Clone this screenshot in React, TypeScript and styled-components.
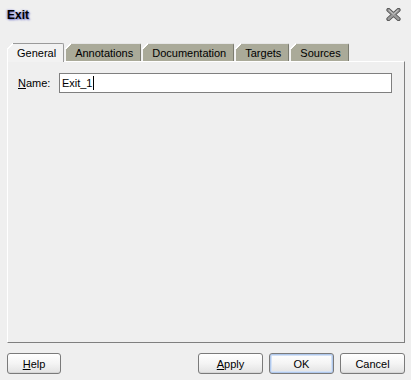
import React from "react";
import styled, { createGlobalStyle } from "styled-components";

const Global = createGlobalStyle`
  html, body { margin: 0; padding: 0; background: #efefef; }
  body { font-family: "Liberation Sans", Arial, sans-serif; font-size: 11px; color: #000; }
`;

const Dialog = styled.div`
  width: 411px;
  height: 380px;
  box-sizing: border-box;
  display: flex;
  flex-direction: column;
  padding: 0 6px 0 7px;
  background: #efefef;
`;

const Header = styled.div`
  height: 43px;
  display: flex;
  justify-content: space-between;
  align-items: flex-start;
`;

const Title = styled.div`
  font-weight: bold;
  font-size: 12px;
  line-height: 14px;
  margin-top: 8px;
  color: #000;
  text-shadow: 1px 1px 2px #6f72c8, -1px 0 2px #9a9ce0;
`;

const CloseBtn = styled.div`
  margin-top: 8px;
  margin-right: 4px;
  width: 15px;
  height: 13px;
`;

const TabStrip = styled.div`
  display: flex;
  gap: 1px;
  height: 18px;
  align-items: stretch;
`;

const Tab = styled.div<{ $active?: boolean }>`
  position: relative;
  box-sizing: border-box;
  padding: 0 7px 0 9px;
  display: flex;
  align-items: center;
  background: ${(p) => (p.$active ? "#f2f2f2" : "#aaaa99")};
  border-top: 1px solid ${(p) => (p.$active ? "#9a9a9a" : "#e6e6e6")};
  border-left: 1px solid ${(p) => (p.$active ? "#ffffff" : "#f4f4f4")};
  border-right: 1px solid ${(p) => (p.$active ? "#9a9a9a" : "#7c7c70")};
  border-top-right-radius: 2px;
  height: ${(p) => (p.$active ? "19px" : "18px")};
  margin-bottom: ${(p) => (p.$active ? "-1px" : "0")};
  z-index: ${(p) => (p.$active ? 1 : 0)};
  &::before {
    content: "";
    position: absolute;
    left: -1px;
    top: -1px;
    width: 6px;
    height: 6px;
    background: linear-gradient(
      135deg,
      #efefef 0,
      #efefef 46%,
      #ffffff 46%,
      #ffffff 62%,
      transparent 62%
    );
  }
`;

const Panel = styled.div`
  flex: 0 0 auto;
  height: 282px;
  box-sizing: border-box;
  border-top: 1px solid #ffffff;
  border-left: 1px solid #ffffff;
  border-right: 1px solid #7f7f7f;
  border-bottom: 1px solid #7f7f7f;
  background: #efefef;
  padding: 11px 12px 0 10px;
`;

const FieldRow = styled.div`
  display: flex;
  align-items: center;
`;

const Label = styled.label`
  width: 41px;
  u { text-decoration: underline; }
`;

const Input = styled.div`
  width: 334px;
  height: 20px;
  box-sizing: border-box;
  border: 1px solid #7f7f7f;
  background: #fff;
  display: flex;
  align-items: center;
  padding-left: 2px;
`;

const Caret = styled.span`
  display: inline-block;
  width: 1px;
  height: 14px;
  background: #000;
  margin-left: 1px;
`;

const Footer = styled.div`
  display: flex;
  align-items: flex-start;
  padding-top: 10px;
`;

const Spacer = styled.div`
  flex: 1;
`;

const Button = styled.button<{ $w: number; $default?: boolean }>`
  width: ${(p) => p.$w}px;
  height: 21px;
  margin-left: 6px;
  box-sizing: border-box;
  border: 1px solid #7a7a7a;
  border-radius: 3px;
  background: linear-gradient(#ffffff 0%, #f4f4f4 50%, #e2e2e2 100%);
  font-family: "Liberation Sans", Arial, sans-serif;
  font-size: 11px;
  color: #000;
  padding: 0;
  box-shadow: ${(p) =>
    p.$default ? "inset 0 0 0 1px #b0c8ec, inset 0 0 0 2px #d4e2f6" : "inset 0 -1px 0 #d6d6d6"};
  &:first-child { margin-left: 0; }
  u { text-decoration: underline; }
`;

const tabs = ["General", "Annotations", "Documentation", "Targets", "Sources"];

export default function App() {
  return (
    <>
      <Global />
      <Dialog>
        <Header>
          <Title>Exit</Title>
          <CloseBtn>
            <svg width="15" height="13" viewBox="0 0 15 13">
              <path d="M2.5 2 L12.5 11 M12.5 2 L2.5 11" stroke="#505050" strokeWidth="4.2" strokeLinecap="round" />
              <path d="M2.5 2 L12.5 11 M12.5 2 L2.5 11" stroke="#9a9a9a" strokeWidth="2.4" strokeLinecap="round" />
              <path d="M3 2.2 L7.5 6.2 L12 2.2" fill="none" stroke="#cfcfcf" strokeWidth="0.8" />
            </svg>
          </CloseBtn>
        </Header>
        <TabStrip>
          {tabs.map((t, i) => (
            <Tab key={t} $active={i === 0}>
              {t}
            </Tab>
          ))}
        </TabStrip>
        <Panel>
          <FieldRow>
            <Label>
              <u>N</u>ame:
            </Label>
            <Input>
              Exit_1
              <Caret />
            </Input>
          </FieldRow>
        </Panel>
        <Footer>
          <Button $w={54}>
            <u>H</u>elp
          </Button>
          <Spacer />
          <Button $w={65}>
            <u>A</u>pply
          </Button>
          <Button $w={65} $default>
            OK
          </Button>
          <Button $w={65}>Cancel</Button>
        </Footer>
      </Dialog>
    </>
  );
}
